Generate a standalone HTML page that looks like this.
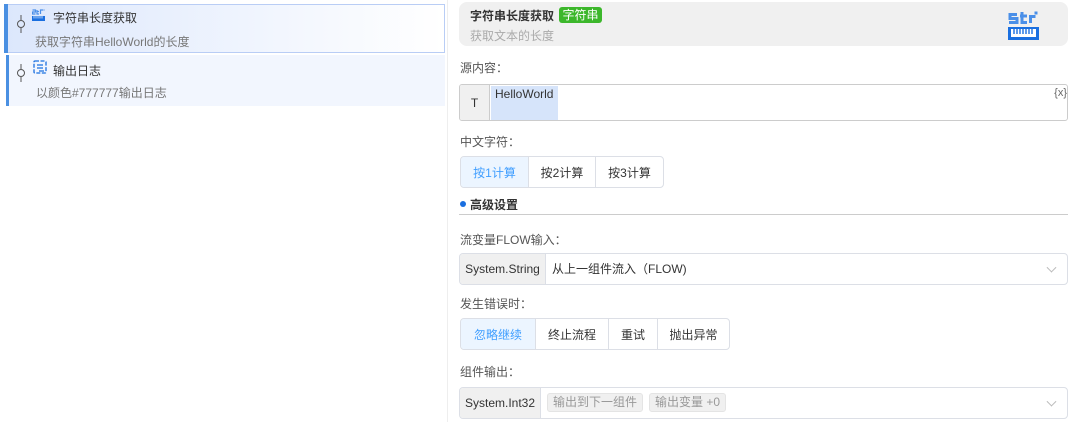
<!DOCTYPE html>
<html><head><meta charset="utf-8"><style>
*{box-sizing:border-box;margin:0;padding:0}
body{width:1071px;height:422px;background:#fff;font-family:"Liberation Sans","Noto Sans CJK SC",sans-serif;font-size:12px;color:#333;position:relative;overflow:hidden}
.a{position:absolute}
.lbl{position:absolute;left:460px;color:#555;font-size:12px}
.bg{position:absolute;display:flex;border:1px solid #dcdfe6;border-radius:4px;overflow:hidden}
.bg div{display:flex;align-items:center;justify-content:center;border-left:1px solid #dcdfe6;color:#333}
.bg div:first-child{border-left:none;background:#ecf5ff;color:#409eff}
.sel{position:absolute;left:459px;width:609px;border:1px solid #dcdfe6;border-radius:4px;display:flex;overflow:hidden}
.pre{background:#f0f0f0;border-right:1px solid #dcdfe6;display:flex;align-items:center;justify-content:center;color:#333}
.chev{position:absolute;right:12px;top:50%;width:7px;height:7px;border-right:1px solid #bbb;border-bottom:1px solid #bbb;transform:translateY(-70%) rotate(45deg)}
.tag{background:#f0f0f0;border:1px solid #e4e4e4;border-radius:3px;color:#999;padding:0 5px;height:19px;line-height:17px;margin-left:6px;margin-top:5px}
</style></head><body>
<div class="a" style="left:4px;top:4px;width:441px;height:49px;border:1px solid #b9cdf5;background:linear-gradient(90deg,#dce7fc,#fff)"></div>
<div class="a" style="left:4px;top:4px;width:4px;height:49px;background:#4a90e2"></div>
<div class="a" style="left:6px;top:55px;width:439px;height:51px;background:#f2f6fe"></div>
<div class="a" style="left:6px;top:55px;width:3px;height:51px;background:#4a90e2"></div>
<svg class="a" style="left:15px;top:15px" width="12" height="20"><line x1="6" y1="0" x2="6" y2="5" stroke="#555"/><circle cx="6" cy="9" r="3.5" fill="none" stroke="#555"/><line x1="6" y1="13" x2="6" y2="18" stroke="#555"/></svg>
<svg class="a" style="left:15px;top:64px" width="12" height="20"><line x1="6" y1="0" x2="6" y2="5" stroke="#555"/><circle cx="6" cy="9" r="3.5" fill="none" stroke="#555"/><line x1="6" y1="13" x2="6" y2="18" stroke="#555"/></svg>
<svg class="a" style="left:32px;top:9px" width="14" height="13"><path d="M0.5 1h3v2h-3v2h3M5 1v4h2M5 2.5h2M8.5 5v-4h2.5M12 0.5v1" stroke="#4a8fe8" stroke-width="1.2" fill="none"/><rect x="0" y="7" width="13" height="5" fill="#1a6fe0"/><path d="M2 7v2.5M4 7v2.5M6 7v2.5M8 7v2.5M10 7v2.5" stroke="#fff" stroke-width=".7"/></svg>
<svg class="a" style="left:33px;top:60px" width="14" height="15"><rect x="1" y="1" width="12" height="12" rx="1" fill="none" stroke="#1a6fe0" stroke-width="1.3" stroke-dasharray="4 1.5"/><path d="M4 5h6M4 8h6M6 11h5" stroke="#1a6fe0" stroke-width="1.2"/></svg>
<div class="a" style="left:53px;top:9px;font-size:12px;color:#333">字符串长度获取</div>
<div class="a" style="left:35px;top:33px;color:#777">获取字符串HelloWorld的长度</div>
<div class="a" style="left:53px;top:62px;color:#333">输出日志</div>
<div class="a" style="left:36px;top:84px;color:#777">以颜色#777777输出日志</div>
<div class="a" style="left:447px;top:0;width:1px;height:422px;background:#eee"></div>
<div class="a" style="left:459px;top:2px;width:609px;height:44px;background:#f0f0f0;border-radius:8px"></div>
<div class="a" style="left:470px;top:7px;font-weight:bold;color:#333">字符串长度获取</div>
<div class="a" style="left:559px;top:7px;width:43px;height:16px;background:#3cb72b;color:#fff;border-radius:3px;text-align:center;line-height:16px">字符串</div>
<div class="a" style="left:470px;top:27px;color:#aaa">获取文本的长度</div>
<svg class="a" style="left:1008px;top:11px" width="34" height="30"><g stroke="#4a8fe8" stroke-width="3" fill="none"><path d="M9 3.5H2v4h7v4H1"/><path d="M14 1v10.5h5M12 5h7"/><path d="M22.5 12V5.5h5"/><path d="M28 0.5v3"/></g><rect x="0" y="16" width="31" height="13" fill="#1a6fe0"/><rect x="3" y="18" width="25" height="8" fill="#fff"/><path d="M6 18v5M9 18v5M12 18v5M15 18v5M18 18v5M21 18v5M24 18v5" stroke="#1a6fe0" stroke-width="1.4"/></svg>
<div class="lbl" style="top:59px">源内容：</div>
<div class="a" style="left:459px;top:84px;width:609px;height:37px;border:1px solid #ccc;border-radius:3px;overflow:hidden">
 <div class="a" style="left:0;top:0;width:30px;height:37px;background:#f0f0f0;border-right:1px solid #ccc;text-align:center;line-height:36px">T</div>
 <div class="a" style="left:31px;top:1px;width:67px;height:34px;background:#d6e4fa;padding:1px 4px;color:#333">HelloWorld</div>
 <div class="a" style="right:0;top:2px;color:#666;font-size:11px">{x}</div>
</div>
<div class="lbl" style="top:133px">中文字符：</div>
<div class="bg" style="left:460px;top:156px;height:32px">
 <div style="width:67px">按1计算</div><div style="width:67px">按2计算</div><div style="width:68px">按3计算</div>
</div>
<div class="a" style="left:460px;top:201px;width:6px;height:6px;border-radius:3px;background:#1a6fe0"></div>
<div class="a" style="left:470px;top:196px;font-weight:bold;color:#333">高级设置</div>
<div class="a" style="left:459px;top:214px;width:609px;height:1px;background:#ccc"></div>
<div class="lbl" style="top:231px">流变量FLOW输入：</div>
<div class="sel" style="top:253px;height:32px"><div class="pre" style="width:86px">System.String</div><div style="padding-left:6px;line-height:30px;color:#333">从上一组件流入（FLOW)</div><span class="chev"></span></div>
<div class="lbl" style="top:295px">发生错误时：</div>
<div class="bg" style="left:460px;top:318px;height:32px">
 <div style="width:74px">忽略继续</div><div style="width:73px">终止流程</div><div style="width:49px">重试</div><div style="width:72px">抛出异常</div>
</div>
<div class="lbl" style="top:363px">组件输出：</div>
<div class="sel" style="top:387px;height:32px"><div class="pre" style="width:81px">System.Int32</div><div class="tag">输出到下一组件</div><div class="tag">输出变量 +0</div><span class="chev"></span></div>
</body></html>
